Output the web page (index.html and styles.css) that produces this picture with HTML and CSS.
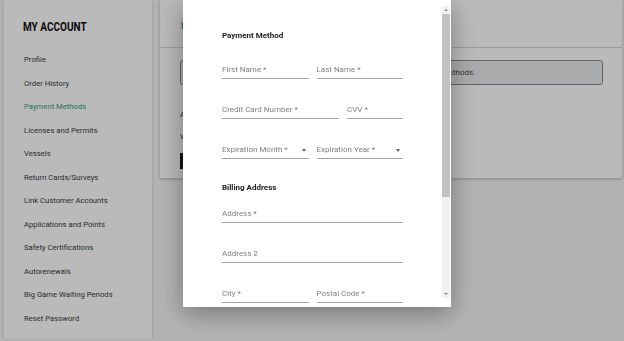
FILE: index.html
```html
<!DOCTYPE html>
<html lang="en">
<head>
    <meta charset="UTF-8">
    <meta name="viewport" content="width=device-width, initial-scale=1.0">
    <title>My Account - Payment Methods</title>
    <link rel="stylesheet" href="styles.css">
</head>
<body>
    <div class="page">
        <aside class="sidebar">
            <h2 class="sidebar-title">MY ACCOUNT</h2>
            <ul class="menu">
                <li>Profile</li>
                <li>Order History</li>
                <li class="active">Payment Methods</li>
                <li>Licenses and Permits</li>
                <li>Vessels</li>
                <li>Return Cards/Surveys</li>
                <li>Link Customer Accounts</li>
                <li>Applications and Points</li>
                <li>Safety Certifications</li>
                <li>Autorenewals</li>
                <li>Big Game Waiting Periods</li>
                <li>Reset Password</li>
            </ul>
        </aside>
        <main class="content-card">
            <div class="card-header">Payment Methods</div>
            <div class="card-body">
                <div class="alert">No cards are saved to your account. Use the button to add payment methods.</div>
                <p class="note">Add a card</p>
                <p class="note">We accept</p>
                <button class="btn-dark">ADD</button>
            </div>
        </main>
    </div>

    <div class="overlay"></div>
    <div class="modal">
        <div class="modal-body">
            <h3 class="section-title">Payment Method</h3>
            <div class="row">
                <div class="field">First Name *</div>
                <div class="field">Last Name *</div>
            </div>
            <div class="row row-card">
                <div class="field">Credit Card Number *</div>
                <div class="field">CVV *</div>
            </div>
            <div class="row">
                <div class="field select">Expiration Month *</div>
                <div class="field select">Expiration Year *</div>
            </div>
            <h3 class="section-title billing">Billing Address</h3>
            <div class="field">Address *</div>
            <div class="field">Address 2</div>
            <div class="row">
                <div class="field">City *</div>
                <div class="field">Postal Code *</div>
            </div>
        </div>
        <div class="scrollbar">
            <span class="arrow up"></span>
            <span class="thumb"></span>
            <span class="rail"></span>
            <span class="arrow down"></span>
        </div>
    </div>
</body>
</html>
```

FILE: styles.css
```css
* {
    box-sizing: border-box;
}
body {
    margin: 0;
    font-family: Roboto, "Noto Sans", sans-serif;
    background-color: #f4f5f4;
    color: #333;
    overflow: hidden;
}
.page {
    display: flex;
    gap: 8px;
    align-items: flex-start;
    padding: 0 2px 0 4px;
}
.sidebar {
    width: 148px;
    height: 338px;
    flex-shrink: 0;
    background-color: #fff;
    box-shadow: 0 1px 3px rgba(0, 0, 0, 0.2);
    padding: 19px 0 0 19px;
}
.sidebar-title {
    margin: 0 0 20px;
    font-size: 12.5px;
    font-weight: bold;
    line-height: 16px;
    color: #111;
    transform: scaleX(0.8);
    transform-origin: left center;
}
.menu {
    list-style: none;
    margin: 0;
    padding: 0 0 0 1px;
}
.menu li {
    font-size: 7.7px;
    line-height: 10px;
    height: 23.5px;
    color: #3a3a3a;
}
.menu li.active {
    color: #35a088;
}
.content-card {
    flex: 1;
    background-color: #fff;
    box-shadow: 0 1px 3px rgba(0, 0, 0, 0.25);
    height: 178px;
}
.card-header {
    height: 48px;
    border-bottom: 1px solid #d6d6d6;
    padding: 21px 20px 0 21px;
    font-size: 9px;
    font-weight: bold;
    color: #35a088;
}
.card-body {
    padding: 12px 19px 0 20px;
}
.alert {
    height: 25px;
    border: 1px solid #8a8a8a;
    border-radius: 3px;
    background-color: #e9ebec;
    font-size: 8px;
    line-height: 23px;
    padding-left: 20px;
    white-space: nowrap;
    overflow: hidden;
    color: #444;
}
.note {
    margin: 0;
    font-size: 8px;
    line-height: 22px;
}
.note:first-of-type {
    margin-top: 19px;
}
.btn-dark {
    margin-top: 4px;
    height: 16px;
    border: none;
    background-color: #1a1a1a;
    color: #fff;
    font-size: 7px;
    padding: 0 10px;
}

.overlay {
    position: fixed;
    inset: 0;
    background-color: rgba(0, 0, 0, 0.27);
}
.modal {
    position: fixed;
    left: 183px;
    top: 0;
    width: 268px;
    height: 307px;
    display: flex;
    background-color: #fff;
    box-shadow: 0 6px 24px rgba(0, 0, 0, 0.35);
}
.modal-body {
    flex: 1;
    overflow: hidden;
    padding: 30px 39px 0;
}
.scrollbar {
    width: 8px;
    margin: 6px 1px 9px 0;
    display: flex;
    flex-direction: column;
    background-color: #f1f1f1;
}
.thumb {
    height: 183px;
    background-color: #c1c1c1;
}
.rail {
    flex: 1;
}
.arrow {
    height: 8px;
    display: flex;
    align-items: center;
    justify-content: center;
}
.arrow::before {
    content: "";
    border-left: 2px solid transparent;
    border-right: 2px solid transparent;
}
.arrow.up::before {
    border-bottom: 2px solid #8a8a8a;
}
.arrow.down::before {
    border-top: 2px solid #8a8a8a;
}
.section-title {
    margin: 0 0 16px;
    font-size: 8px;
    line-height: 12px;
    font-weight: bold;
    color: #222;
}
.section-title.billing {
    margin: 4px 0 8px;
}
.row {
    display: grid;
    grid-template-columns: 1fr 1fr;
    gap: 8px;
}
.row-card {
    grid-template-columns: 1fr 56px;
}
.field {
    position: relative;
    height: 21px;
    border-bottom: 1px solid #a0a0a0;
    margin-bottom: 19px;
    font-size: 8px;
    line-height: 12px;
    color: #808080;
    padding-top: 6px;
}
.field.select::after {
    content: "";
    position: absolute;
    right: 3px;
    top: 11px;
    border-left: 2.5px solid transparent;
    border-right: 2.5px solid transparent;
    border-top: 3px solid #666;
}
```
